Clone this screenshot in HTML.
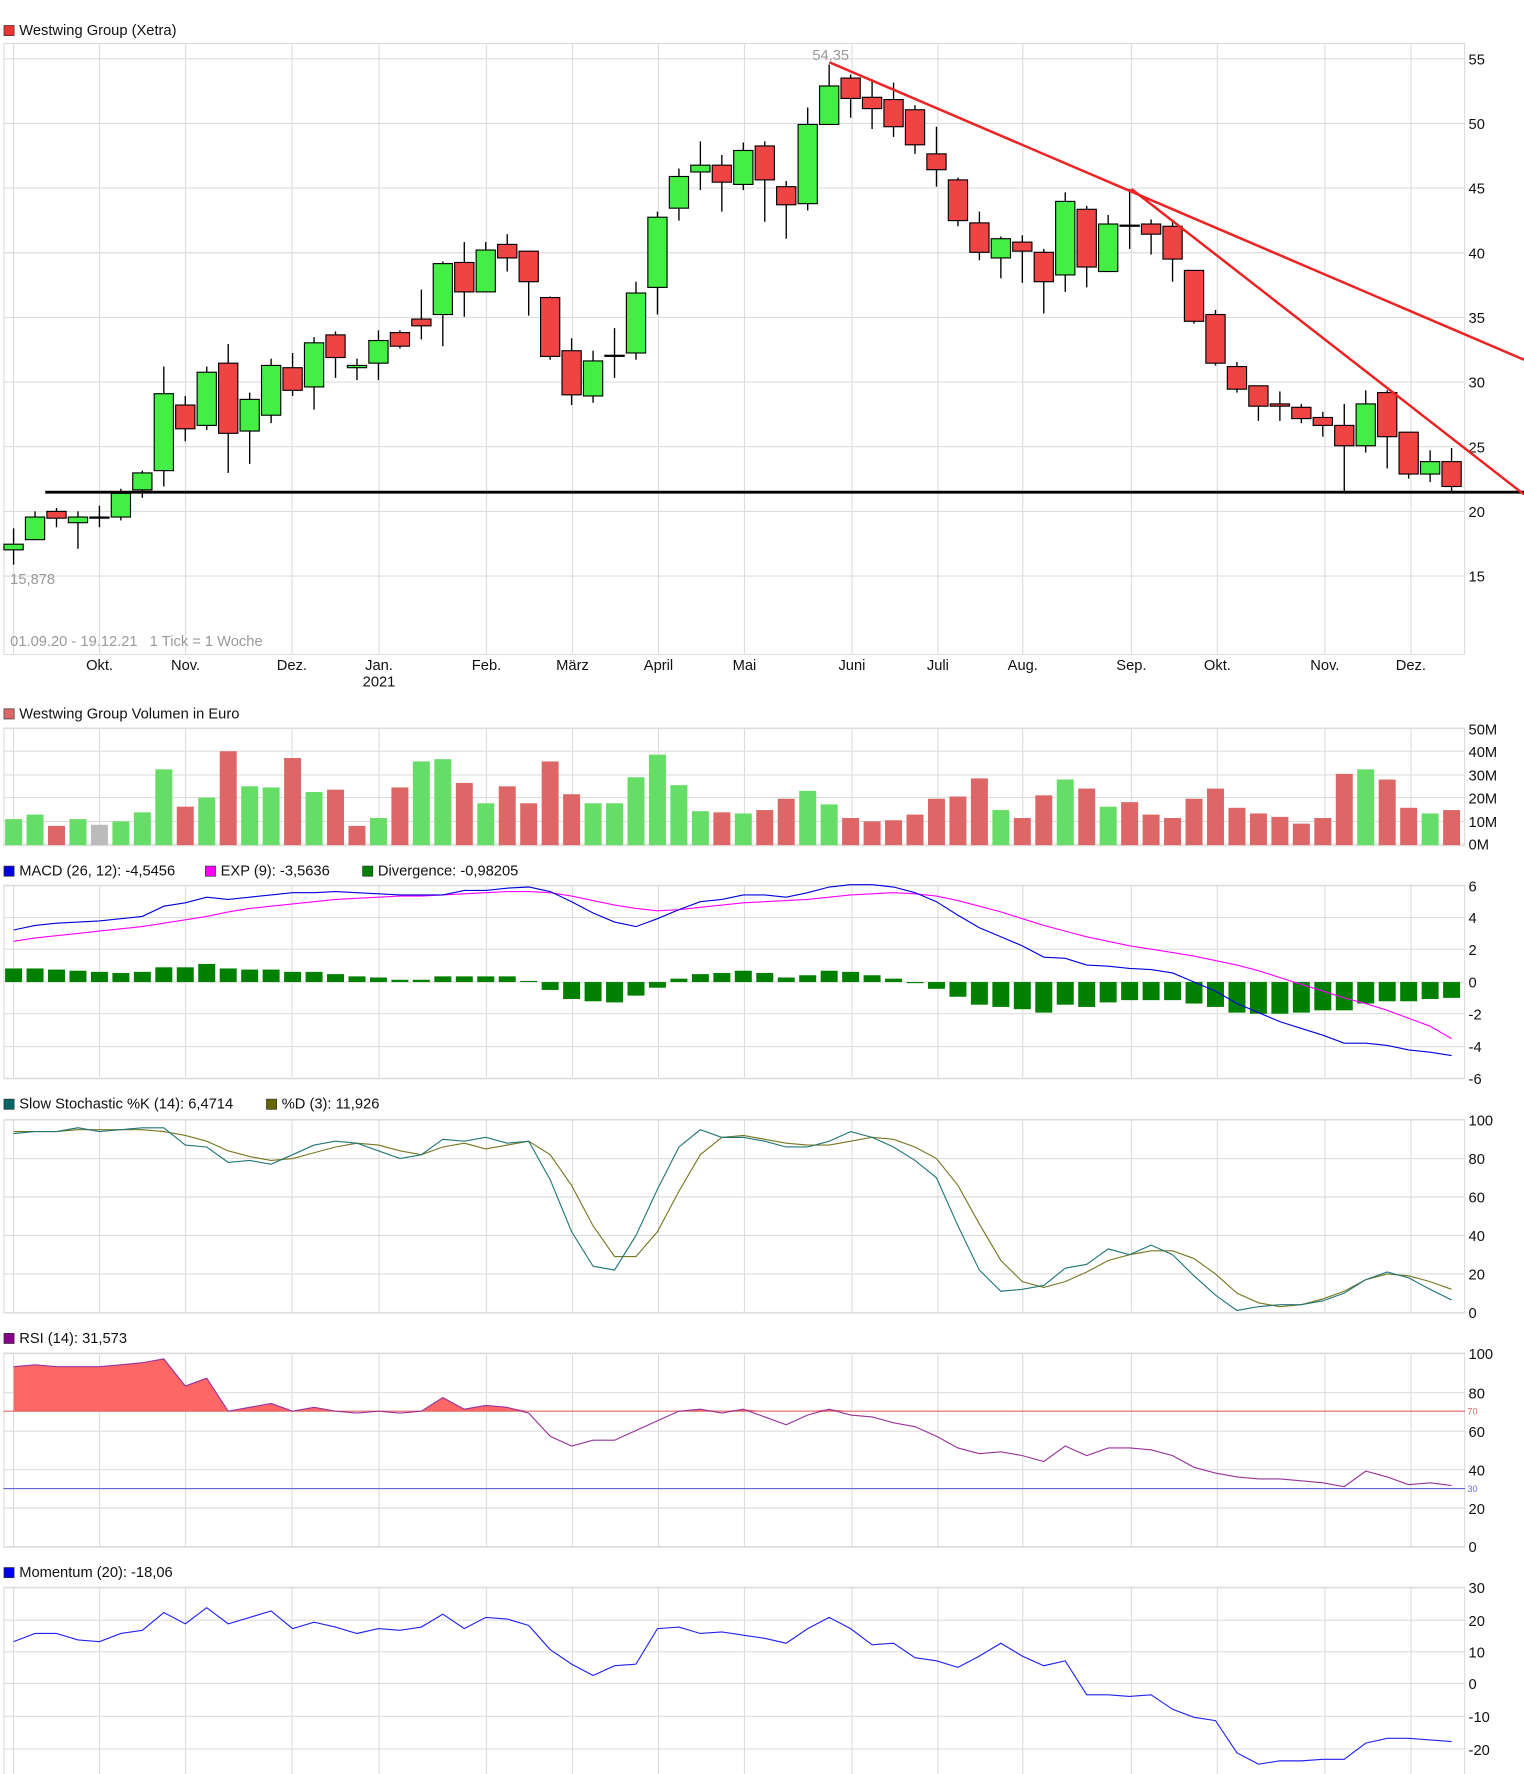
<!DOCTYPE html>
<html><head><meta charset="utf-8"><style>
html,body{margin:0;padding:0;background:#fff;}
svg{display:block;}
text{font-family:"Liberation Sans",Arial,sans-serif;font-size:13px;fill:#111;}
</style></head><body>
<svg id="s" width="1524" height="1774" viewBox="0 0 1347 1568" preserveAspectRatio="none" xmlns="http://www.w3.org/2000/svg"></svg>
<script>
var s=document.getElementById('s'),o='';
function X(i){return 12+i*18.97;}
var vg=[12,88,164,258,335,430,506,582,658,753,829,904,1000,1076,1171,1247];
function panel(t,b,hl){
 o+='<rect x="3.5" y="'+(t+0.5)+'" width="1291" height="'+(b-t)+'" fill="#fff" stroke="#ddd"/>';
 vg.forEach(function(x){o+='<line x1="'+x+'" y1="'+t+'" x2="'+x+'" y2="'+b+'" stroke="#ddd"/>';});
 hl.forEach(function(h){o+='<line x1="3" y1="'+h[0]+'" x2="1295" y2="'+h[0]+'" stroke="#ddd"/><text x="1298" y="'+(h[0]+5)+'">'+h[1]+'</text>';});
}
function title(y,items){items.forEach(function(it){var x=it[2];o+='<rect x="'+(x+0.5)+'" y="'+(y-8.5)+'" width="9" height="9" fill="'+it[0]+'" stroke="#333" stroke-width="0.6"/><text x="'+(x+14)+'" y="'+y+'">'+it[1]+'</text>';});}
function line(vals,f,c){var p=vals.map(function(v,i){return X(i).toFixed(1)+','+f(v).toFixed(1);}).join(' ');o+='<polyline points="'+p+'" fill="none" stroke="'+c+'" stroke-width="1"/>';}
title(31,[["#ee3333","Westwing Group (Xetra)",3]]);
var ph=[];for(var p=55;p>=15;p-=5)ph.push([452-(p-20)*11.43,p]);
panel(38,578,ph);
var m=[["Okt.",88],["Nov.",164],["Dez.",258],["Jan.",335],["Feb.",430],["März",506],["April",582],["Mai",658],["Juni",753],["Juli",829],["Aug.",904],["Sep.",1000],["Okt.",1076],["Nov.",1171],["Dez.",1247]];
m.forEach(function(a){o+='<text x="'+a[1]+'" y="592" text-anchor="middle">'+a[0]+'</text>';});
o+='<text x="335" y="607" text-anchor="middle">2021</text>';
var C=[[481,486,467,499,'g'],[457,477,452,477,'g'],[452,458,449,466,'r'],[457,462,452,485,'g'],[457,458,447,466,'g'],[436,457,432,460,'g'],[418,433,416,440,'g'],[348,416,324,430,'g'],[358,379,350,390,'r'],[329,376,324,380,'g'],[321,383,304,418,'r'],[353,381,347,410,'g'],[323,367,317,374,'g'],[325,345,312,350,'r'],[303,342,298,362,'g'],[296,316,293,334,'r'],[323,325,317,336,'g'],[301,321,292,336,'g'],[294,306,292,308,'r'],[282,288,256,300,'r'],[233,278,231,306,'g'],[232,258,214,280,'r'],[221,258,214,258,'g'],[216,228,207,240,'r'],[222,249,222,279,'r'],[263,315,262,318,'r'],[310,349,299,358,'r'],[319,350,310,356,'g'],[314,315,290,334,'g'],[259,312,249,318,'g'],[192,254,187,278,'g'],[156,184,149,195,'g'],[146,152,125,168,'g'],[146,161,137,187,'r'],[133,163,126,168,'g'],[129,159,125,196,'r'],[165,181,160,211,'r'],[110,180,95,186,'g'],[76,110,57,110,'g'],[69,87,66,104,'r'],[86,96,70,114,'r'],[88,112,73,121,'r'],[97,128,93,136,'r'],[136,150,112,165,'r'],[159,195,157,200,'r'],[197,223,187,230,'r'],[211,228,209,246,'g'],[214,222,208,250,'r'],[223,249,220,277,'r'],[178,243,170,258,'g'],[185,236,182,254,'r'],[198,240,190,240,'g'],[199,200,167,220,'k'],[198,207,194,225,'r'],[200,229,196,249,'r'],[239,284,239,286,'r'],[278,321,274,323,'r'],[324,344,320,347,'r'],[341,359,341,372,'r'],[357,359,346,372,'r'],[360,370,357,374,'r'],[369,376,364,386,'r'],[376,394,357,434,'r'],[357,394,345,400,'g'],[347,386,345,414,'r'],[382,419,382,423,'r'],[408,419,398,426,'g'],[408,430,396,434,'r']];
C.forEach(function(c,i){var x=X(i);o+='<line x1="'+x+'" y1="'+c[2]+'" x2="'+x+'" y2="'+c[3]+'" stroke="#000" stroke-width="1.2"/>';
 var col=c[4]=='g'?'#44ee44':c[4]=='r'?'#ee4444':'#000';o+='<rect x="'+(x-8.5)+'" y="'+c[0]+'" width="17" height="'+Math.max(1,c[1]-c[0])+'" fill="'+col+'" stroke="#000" stroke-width="1"/>';});
o+='<line x1="40" y1="435" x2="1347" y2="435" stroke="#000" stroke-width="2.5"/>';
o+='<line x1="733" y1="55" x2="1347" y2="318" stroke="#ee2222" stroke-width="2.2"/>';
o+='<line x1="1000" y1="167" x2="1347" y2="437" stroke="#ee2222" stroke-width="2.2"/>';
o+='<text x="718" y="53" style="fill:#999">54,35</text><text x="9" y="516" style="fill:#999">15,878</text><text x="9" y="571" style="fill:#999">01.09.20 - 19.12.21 &#160; 1 Tick = 1 Woche</text>';
title(635,[["#dd6666","Westwing Group Volumen in Euro",3]]);
panel(643,747,[[644,"50M"],[664,"40M"],[685,"30M"],[705,"20M"],[726,"10M"],[746,"0M"]]);
var V=[[724,'g'],[720,'g'],[730,'r'],[724,'g'],[729,'y'],[726,'g'],[718,'g'],[680,'g'],[713,'r'],[705,'g'],[664,'r'],[695,'g'],[696,'g'],[670,'r'],[700,'g'],[698,'r'],[730,'r'],[723,'g'],[696,'r'],[673,'g'],[671,'g'],[692,'r'],[710,'g'],[695,'r'],[710,'r'],[673,'r'],[702,'r'],[710,'g'],[710,'g'],[687,'g'],[667,'g'],[694,'g'],[717,'g'],[718,'r'],[719,'g'],[716,'r'],[706,'r'],[699,'g'],[711,'g'],[723,'r'],[726,'r'],[725,'r'],[720,'r'],[706,'r'],[704,'r'],[688,'r'],[716,'g'],[723,'r'],[703,'r'],[689,'g'],[697,'r'],[713,'g'],[709,'r'],[720,'r'],[723,'r'],[706,'r'],[697,'r'],[714,'r'],[719,'r'],[722,'r'],[728,'r'],[723,'r'],[684,'r'],[680,'g'],[689,'r'],[714,'r'],[719,'g'],[716,'r']];
V.forEach(function(v,i){var c=v[1]=='g'?'#66dd66':v[1]=='r'?'#dd6666':'#bbbbbb';o+='<rect x="'+(X(i)-7.5)+'" y="'+v[0]+'" width="15" height="'+(747-v[0])+'" fill="'+c+'"/>';});
title(774,[["#0000dd","MACD (26, 12): -4,5456",3],["#ff00ff","EXP (9): -3,5636",181],["#008000","Divergence: -0,98205",320]]);
panel(782,953,[[783,"6"],[811,"4"],[839,"2"],[868,"0"],[896,"-2"],[925,"-4"],[953,"-6"]]);
var D=[12,12,11,10,9,8,9,13,13,16,12,11,11,9,9,7,5,4,2,2,5,5,5,5,1,-7,-15,-17,-18,-12,-5,3,7,8,10,8,4,6,10,9,6,3,0,-6,-13,-20,-22,-24,-27,-20,-22,-18,-16,-16,-16,-19,-22,-27,-28,-28,-27,-25,-25,-19,-17,-17,-15,-14];
D.forEach(function(d,i){var y=d>0?868-d:868;o+='<rect x="'+(X(i)-7.5)+'" y="'+y+'" width="15" height="'+Math.max(1,Math.abs(d))+'" fill="#008000"/>';});
var M=[822,818,816,815,814,812,810,801,798,793,795,793,791,789,789,788,789,790,791,791,791,787,787,785,784,788,797,807,815,819,812,804,797,795,791,791,793,789,784,782,782,784,789,797,809,820,828,836,846,847,853,854,856,857,860,868,876,887,895,903,909,915,922,922,924,928,930,933];
var E=[832,829,827,825,823,821,819,816,813,810,806,803,801,799,797,795,794,793,792,792,791,790,789,788,788,789,792,796,800,803,805,804,802,800,798,797,796,795,793,791,790,789,790,792,796,801,806,812,818,823,828,832,836,839,842,845,849,853,858,864,870,876,882,887,893,900,907,918];
line(E,function(v){return v},'#ff00ff');line(M,function(v){return v},'#0000dd');
title(980,[["#006666","Slow Stochastic %K (14): 6,4714",3],["#666600","%D (3): 11,926",235]]);
panel(989,1160,[[990,"100"],[1024,"80"],[1058,"60"],[1092,"40"],[1126,"20"],[1160,"0"]]);
var K=[93,94,94,96,94,95,96,96,87,86,78,79,77,82,87,89,88,84,80,82,90,89,91,88,89,69,42,24,22,40,64,86,95,91,91,89,86,86,89,94,91,86,79,70,45,22,11,12,14,23,25,33,30,35,30,19,9,1,3,4,4,6,10,17,21,18,12,6.5];
var Dd=[94,94,94,95,95,95,95,94,92,89,84,81,79,80,83,86,88,87,84,82,86,88,85,87,89,82,66,45,29,29,42,63,82,91,92,90,88,87,87,89,91,90,86,80,66,46,27,16,13,16,21,27,30,32,32,28,20,10,5,3,4,7,11,17,20,19,16,12];
var sf=function(v){return 1160-v*1.7};
line(Dd,sf,'#777722');line(K,sf,'#227777');
title(1187,[["#880088","RSI (14): 31,573",3]]);
panel(1196,1367,[[1196,"100"],[1231,"80"],[1265,"60"],[1299,"40"],[1333,"20"],[1367,"0"]]);
var R=[93,94,93,93,93,94,95,97,83,87,70,72,74,70,72,70,69,70,69,70,77,71,73,72,69,57,52,55,55,60,65,70,71,69,71,67,63,68,71,68,67,64,62,57,51,48,49,47,44,52,47,51,51,50,47,41,38,36,35,35,34,33,31,39,36,32,33,31.5];
var rf=function(v){return 1367-v*1.71};
var fp='12,'+rf(70)+' ';R.forEach(function(v,i){fp+=X(i).toFixed(1)+','+rf(Math.max(v,70)).toFixed(1)+' ';});fp+=X(R.length-1)+','+rf(70);
o+='<polygon points="'+fp+'" fill="#ff6666"/>';
o+='<line x1="3" y1="'+rf(70)+'" x2="1295" y2="'+rf(70)+'" stroke="#dd6666"/><text x="1297" y="'+(rf(70)+3)+'" style="font-size:8px;fill:#dd6666">70</text>';
o+='<line x1="3" y1="'+rf(30)+'" x2="1295" y2="'+rf(30)+'" stroke="#6666cc"/><text x="1297" y="'+(rf(30)+3)+'" style="font-size:8px;fill:#6666dd">30</text>';
line(R,rf,'#993399');
title(1394,[["#0000ee","Momentum (20): -18,06",3]]);
panel(1403,1568,[[1403,"30"],[1432,"20"],[1460,"10"],[1488,"0"],[1517,"-10"],[1546,"-20"]]);
var Mo=[13,15.5,15.5,13.5,13,15.5,16.5,22,18.5,23.5,18.5,20.5,22.5,17,19,17.5,15.5,17,16.5,17.5,21.5,17,20.5,20,18,10.5,6,2.5,5.5,6,17,17.5,15.5,16,15,14,12.5,17,20.5,17,12,12.5,8,7,5,8.5,12.5,8.5,5.5,7,-3.5,-3.5,-4,-3.5,-8,-10.5,-11.5,-21.5,-25,-24,-24,-23.5,-23.5,-18.5,-17,-17,-17.5,-18];
line(Mo,function(v){return 1488-v*2.85},'#2222ee');
s.innerHTML=o;
</script>
</body></html>
